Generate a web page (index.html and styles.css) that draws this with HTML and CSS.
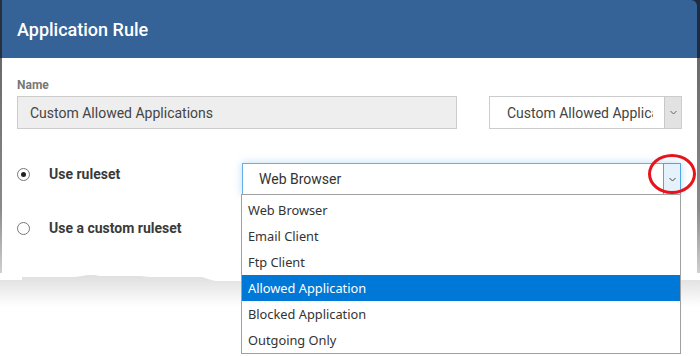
FILE: index.html
```html
<!DOCTYPE html>
<html lang="en">
<head>
  <meta charset="UTF-8">
  <meta name="viewport" content="width=device-width, initial-scale=1.0">
  <title>Application Rule</title>
  <link rel="stylesheet" href="styles.css">
</head>
<body>
  <div class="screen">
    <div class="window">
      <div class="window-head">
        <h1>Application Rule</h1>
      </div>
      <div class="window-body">
        <div class="name-row">
          <div class="field">
            <label class="field-label">Name</label>
            <div class="text-input">Custom Allowed Applications</div>
          </div>
          <div class="combo combo-small">
            <span class="combo-value">Custom Allowed Applications</span>
            <span class="combo-btn">
              <svg width="7" height="5" viewBox="0 0 7 5"><path d="M0.5 1 L3.5 4 L6.5 1" fill="none" stroke="#666" stroke-width="1"/></svg>
            </span>
          </div>
        </div>

        <div class="option-row">
          <span class="radio checked"></span>
          <span class="option-label">Use ruleset</span>
          <div class="combo combo-open">
            <span class="combo-value">Web Browser</span>
            <span class="combo-btn">
              <svg width="7" height="5" viewBox="0 0 7 5"><path d="M0.5 1 L3.5 4 L6.5 1" fill="none" stroke="#444" stroke-width="1"/></svg>
            </span>
            <ul class="dropdown">
              <li>Web Browser</li>
              <li>Email Client</li>
              <li>Ftp Client</li>
              <li class="selected">Allowed Application</li>
              <li>Blocked Application</li>
              <li>Outgoing Only</li>
            </ul>
            <span class="callout"></span>
          </div>
        </div>

        <div class="option-row">
          <span class="radio"></span>
          <span class="option-label">Use a custom ruleset</span>
        </div>
      </div>
    </div>
    <div class="tear">
      <svg width="700" height="14" viewBox="0 0 700 14"><path d="M0 0 H700 V7 H640 L632 8 H600 L590 10 H510 L500 9 H440 L430 8 H360 L350 7 H250 L242 8 H215 L208 6 L202 4 H150 L140 3 H100 L95 2 H88 L75 4 H22 V7 H0 Z" fill="#fff"/></svg>
    </div>
  </div>
</body>
</html>
```

FILE: styles.css
```css
body {
  margin: 0;
  background: #fff;
  font-family: Roboto, "Liberation Sans", Arial, sans-serif;
  color: #333;
}
.screen {
  width: 700px;
  height: 356px;
  overflow: hidden;
}
.window {
  background: linear-gradient(#1c2b40, #1c2b40) right top / 12px 12px no-repeat;
}
.window-head {
  height: 58px;
  margin-left: 2px;
  margin-right: 3px;
  padding-left: 15px;
  display: flex;
  align-items: center;
  background: #356297;
  border-top-right-radius: 6px;
  box-shadow: -2px 0 0 #26303d, 3px 0 0 #1e2c42;
}
.window-head h1 {
  margin: 0;
  font-size: 18px;
  font-weight: 500;
  color: #fff;
}
.window-body {
  height: 215px;
  box-sizing: border-box;
  padding: 20px 15px 0 15px;
  background: #fff;
  border-left: 2px solid #4a4d52;
  border-right: 3px solid;
  border-image: linear-gradient(#6a6a6a, #8a8a8a 70%, #d0d0d0) 1;
  border-image-slice: 0 1 0 1;
  border-image-width: 0 3px 0 2px;
}
.name-row {
  display: flex;
  align-items: flex-end;
}
.field {
  width: 440px;
  margin-right: 32px;
}
.field-label {
  display: block;
  font-size: 12px;
  font-weight: 700;
  line-height: 14px;
  color: #777;
  margin-bottom: 4px;
}
.text-input {
  height: 33px;
  box-sizing: border-box;
  padding-left: 12px;
  display: flex;
  align-items: center;
  font-size: 14px;
  color: #444;
  background: #eee;
  border: 1px solid #ccc;
}
.combo {
  position: relative;
  display: flex;
  box-sizing: border-box;
  background: #fff;
  font-size: 14px;
  color: #333;
}
.combo-value {
  flex: 1;
  display: flex;
  align-items: center;
  white-space: nowrap;
  overflow: hidden;
}
.combo-btn {
  width: 17px;
  display: flex;
  align-items: center;
  justify-content: center;
  box-sizing: border-box;
}
.combo-small {
  width: 193px;
  height: 33px;
  border: 1px solid #ccc;
}
.combo-small .combo-value {
  padding-left: 17px;
  margin-right: 11px;
  color: #444;
}
.combo-small .combo-btn {
  background: #e2e2e2;
  border-left: 1px solid #c8c8c8;
}
.option-row {
  display: flex;
  align-items: flex-start;
  margin-top: 34px;
}
.option-row + .option-row {
  margin-top: 22px;
}
.radio {
  width: 13px;
  height: 13px;
  box-sizing: border-box;
  margin-top: 5px;
  margin-right: 19px;
  border: 1px solid #777;
  border-radius: 50%;
  display: flex;
  align-items: center;
  justify-content: center;
}
.radio.checked::after {
  content: "";
  width: 5px;
  height: 5px;
  border-radius: 50%;
  background: #222;
}
.option-label {
  width: 193px;
  font-size: 14px;
  font-weight: 700;
  line-height: 20px;
  margin-top: 1px;
  color: #3a3a3a;
}
.combo-open {
  width: 439px;
  height: 32px;
  border: 1px solid #66aee6;
  box-shadow: 0 0 8px rgba(102, 175, 233, 0.45);
}
.combo-open .combo-value {
  padding-left: 16px;
}
.combo-open .combo-btn {
  margin: -1px -1px -1px 0;
  width: 18px;
  background: #e5f1fb;
  border: 1px solid #55a3e3;
}
.dropdown {
  position: absolute;
  top: 100%;
  left: -2px;
  right: -1px;
  margin: 0;
  padding: 2px 0 0;
  list-style: none;
  background: #fff;
  border: 1px solid #a0a0a0;
  font-family: "Noto Sans", "Open Sans", sans-serif;
  font-size: 12.8px;
  color: #333;
  z-index: 2;
}
.dropdown li {
  height: 26px;
  line-height: 26px;
  padding-left: 6px;
}
.dropdown li.selected {
  background: #0078d7;
  color: #fff;
}
.callout {
  position: absolute;
  left: 405px;
  top: -10px;
  width: 42px;
  height: 34px;
  border: 3px solid #e8141b;
  border-radius: 50%;
  z-index: 3;
}
.tear {
  height: 40px;
  background: linear-gradient(#dedede 0, #e4e4e4 8px, #fff 34px);
}
.tear svg {
  display: block;
}
```
